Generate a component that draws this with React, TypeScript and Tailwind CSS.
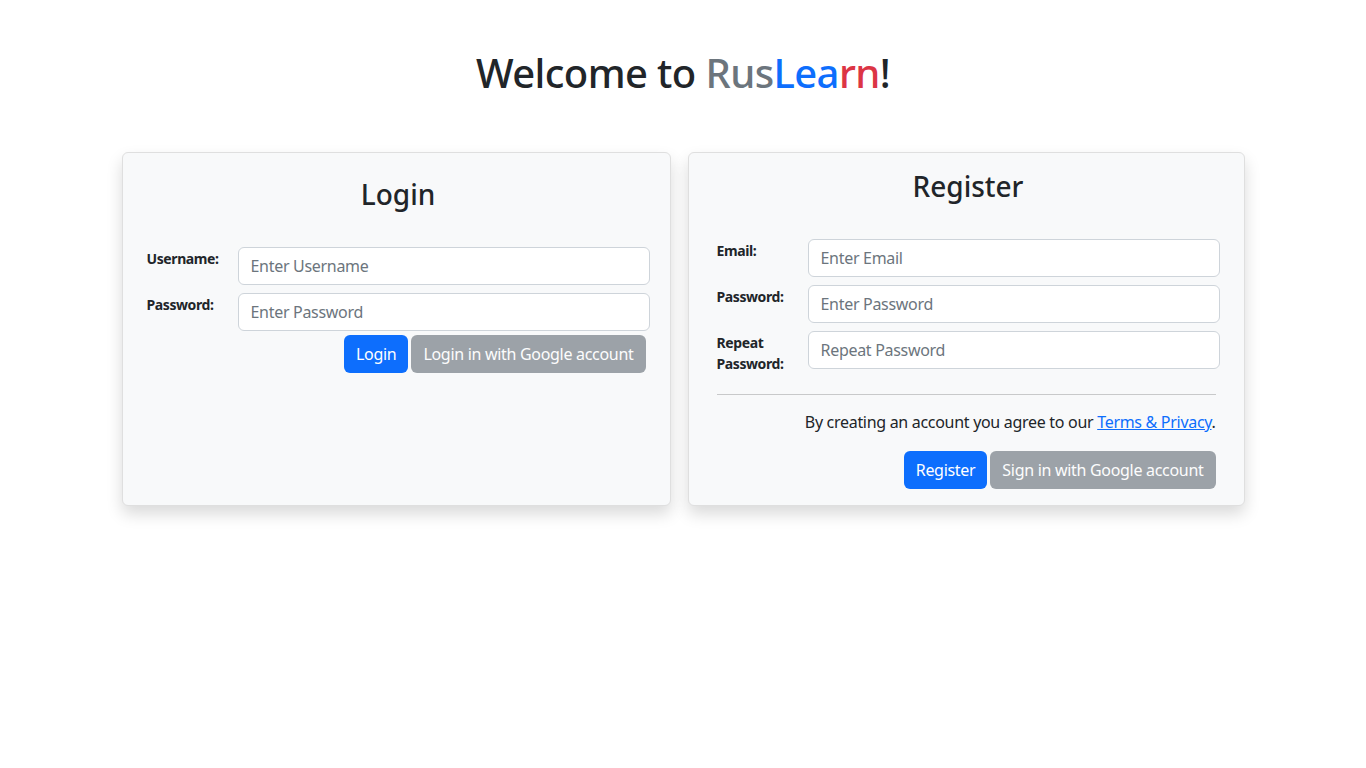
import React from 'react';

const inputCls =
  'h-[38px] w-full rounded-[6px] border border-[#ced4da] bg-white px-3 text-base tracking-[-0.3px] text-[#212529] outline-none placeholder:text-[#6c757d]';

const labelCls = 'mt-[1px] w-[79px] shrink-0 text-[14px] leading-[21px] font-bold tracking-[-0.4px]';

const primaryBtn =
  'h-[38px] rounded-[6px] bg-[#0d6efd] px-3 text-base tracking-[-0.3px] text-white';

const googleBtn =
  'h-[38px] rounded-[6px] bg-[#6c757d] px-3 text-base tracking-[-0.3px] text-white opacity-65';

const Field: React.FC<{ label: React.ReactNode; placeholder: string; type?: string }> = ({
  label,
  placeholder,
  type = 'text',
}) => (
  <div className="flex items-start gap-3">
    <label className={labelCls}>{label}</label>
    <input type={type} placeholder={placeholder} className={inputCls} />
  </div>
);

const App: React.FC = () => {
  return (
    <div className="min-h-screen bg-white font-['Noto_Sans',sans-serif] text-[#212529]">
      <h1 className="pt-[49px] text-center text-[40px] leading-[48px] font-medium tracking-[-0.6px]">
        Welcome to <span className="text-[#6c757d]">Rus</span>
        <span className="text-[#0d6efd]">Lea</span>
        <span className="text-[#dc3545]">rn</span>!
      </h1>

      <div className="mt-[55px] flex justify-center gap-[17px]">
        {/* Login */}
        <div className="w-[549px] rounded-[6px] border border-[#dfdfdf] bg-[#f8f9fa] pt-6 pr-5 pl-6 shadow-[0_8px_16px_rgba(0,0,0,0.15)]">
          <h3 className="text-center text-[28px] leading-[34px] font-medium">Login</h3>
          <div className="mt-9 flex flex-col gap-2">
            <Field label="Username:" placeholder="Enter Username" />
            <Field label="Password:" placeholder="Enter Password" type="password" />
          </div>
          <div className="mt-1 flex justify-end gap-[3px] pr-1">
            <button className={primaryBtn}>Login</button>
            <button className={googleBtn}>Login in with Google account</button>
          </div>
        </div>

        {/* Register */}
        <div className="w-[557px] rounded-[6px] border border-[#dfdfdf] bg-[#f8f9fa] pt-4 pr-6 pb-4 pl-7 shadow-[0_8px_16px_rgba(0,0,0,0.15)]">
          <h3 className="text-center text-[28px] leading-[34px] font-medium">Register</h3>
          <div className="mt-9 flex flex-col gap-2">
            <Field label="Email:" placeholder="Enter Email" type="email" />
            <Field label="Password:" placeholder="Enter Password" type="password" />
            <Field
              label={
                <>
                  Repeat
                  <br />
                  Password:
                </>
              }
              placeholder="Repeat Password"
              type="password"
            />
          </div>
          <hr className="mt-5 mr-1 border-t border-[#c8c9ca]" />
          <p className="mt-[15px] mr-1 text-right text-base leading-6 tracking-[-0.3px]">
            By creating an account you agree to our{' '}
            <a href="#" className="text-[#0d6efd] underline">
              Terms &amp; Privacy
            </a>
            .
          </p>
          <div className="mt-[17px] mr-1 flex justify-end gap-[3px]">
            <button className={primaryBtn}>Register</button>
            <button className={googleBtn}>Sign in with Google account</button>
          </div>
        </div>
      </div>
    </div>
  );
};

export default App;
